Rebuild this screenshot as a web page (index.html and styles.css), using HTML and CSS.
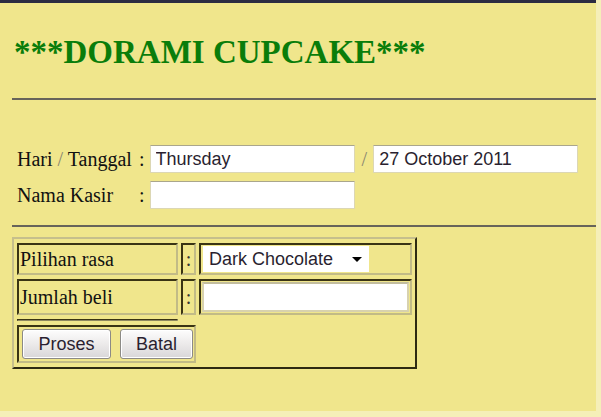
FILE: index.html
```html
<!DOCTYPE html>
<html lang="en">
<head>
    <meta charset="UTF-8">
    <title>Dorami Cupcake</title>
    <link rel="stylesheet" href="styles.css">
</head>
<body>
    <div class="page">
        <h1 class="title">***DORAMI CUPCAKE***</h1>
        <hr class="rule first">

        <div class="row first">
            <span class="name">Hari <span class="soft">/</span> Tanggal</span>
            <span class="colon">:</span>
            <input class="field" type="text" value="Thursday">
            <span class="slash">/</span>
            <input class="field" type="text" value="27 October 2011">
        </div>
        <div class="row">
            <span class="name">Nama Kasir</span>
            <span class="colon">:</span>
            <input class="field" type="text" value="">
        </div>

        <hr class="rule second">

        <table class="order">
            <tr>
                <td class="c-label">Pilihan rasa</td>
                <td class="c-colon">:</td>
                <td class="c-input">
                    <span class="pick">
                        <select class="flavor">
                            <option>Dark Chocolate</option>
                            <option>Vanilla</option>
                            <option>Strawberry</option>
                        </select>
                    </span>
                </td>
            </tr>
            <tr>
                <td class="c-label">Jumlah beli</td>
                <td class="c-colon">:</td>
                <td class="c-input"><input class="qty" type="text" value=""></td>
            </tr>
            <tr>
                <td class="c-empty"></td>
            </tr>
            <tr>
                <td class="c-buttons" colspan="2">
                    <div class="buttons">
                        <button class="btn proses">Proses</button>
                        <button class="btn batal">Batal</button>
                    </div>
                </td>
            </tr>
        </table>
    </div>
</body>
</html>
```

FILE: styles.css
```css
html, body {
    margin: 0;
    padding: 0;
}

body {
    background: #f5efb8;
    font-family: "Liberation Serif", "Times New Roman", serif;
    color: #111;
}

.page {
    width: 596px;
    height: 411px;
    background: #f0e68c;
    border-top: 3px solid #2c2c42;
    padding-left: 12px;
    box-sizing: border-box;
    overflow: hidden;
}

.title {
    margin: 33px 0 0 2px;
    font-size: 33px;
    line-height: 33px;
    font-weight: bold;
    color: #0a7d0a;
}

.rule {
    border: 0;
    height: 2px;
    background: #67645a;
    margin: 0;
}

.rule.first {
    margin-top: 29px;
}

.rule.second {
    margin-top: 16px;
}

.row {
    display: flex;
    align-items: center;
    margin-top: 8px;
    padding-left: 5px;
    font-size: 20px;
}

.row.first {
    margin-top: 45px;
}

.name {
    width: 122px;
}

.soft, .slash {
    color: #8a8670;
}

.colon {
    margin-right: 5px;
}

.slash {
    margin: 0 6px 0 7px;
}

.field {
    width: 205px;
    height: 28px;
    box-sizing: border-box;
    border: 1px solid #dcd7b4;
    border-top-color: #aaa68c;
    background: #fff;
    padding: 0 5px;
    font-family: "Liberation Sans", Arial, sans-serif;
    font-size: 18px;
    color: #2a1f30;
    outline: none;
}

.order {
    margin-top: 10px;
    border-collapse: separate;
    border-spacing: 3px 4px;
    border: 2px solid;
    border-color: #c6bf8c #2e2a12 #2e2a12 #c6bf8c;
    font-size: 20px;
}

.order td {
    border: 2px solid;
    border-color: #3a3414 #c2bb86 #c2bb86 #3a3414;
    padding: 1px;
    vertical-align: middle;
}

.c-label {
    width: 155px;
}

.c-colon {
    width: 9px;
    text-align: center;
    color: #333;
}

.c-input {
    width: 205px;
}

.order td.c-empty {
    padding: 0;
    height: 0;
    border-width: 1px;
    border-color: #3a3414 #c2bb86 #8f8860 #3a3414;
}

.pick {
    position: relative;
    display: inline-block;
    margin-left: 1px;
}

.pick::after {
    content: "";
    position: absolute;
    right: 7px;
    top: 11px;
    border-left: 5px solid transparent;
    border-right: 5px solid transparent;
    border-top: 5px solid #000;
    pointer-events: none;
}

.flavor {
    appearance: none;
    -webkit-appearance: none;
    display: block;
    width: 166px;
    height: 26px;
    border: 0;
    border-radius: 0;
    background: #fff;
    padding: 0 6px;
    font-family: "Liberation Sans", Arial, sans-serif;
    font-size: 18px;
    color: #2a1f30;
}

.qty {
    display: block;
    width: 207px;
    height: 30px;
    box-sizing: border-box;
    border: 2px solid #d8d2ae;
    border-top-color: #c2bd9e;
    background: #fff;
    outline: none;
}

.order td.c-buttons {
    padding: 2px 1px;
}

.buttons {
    display: flex;
    gap: 9px;
    padding-left: 2px;
}

.btn {
    height: 30px;
    box-sizing: border-box;
    border: 1px solid #8c8a86;
    border-radius: 3px;
    background: linear-gradient(#fdfdfd, #eceaea 50%, #d9d7d8);
    box-shadow: inset 0 0 0 1px #fff;
    font-family: "Liberation Sans", Arial, sans-serif;
    font-size: 18px;
    color: #2a1f30;
    padding: 0;
}

.proses {
    width: 89px;
}

.batal {
    width: 73px;
}
```
